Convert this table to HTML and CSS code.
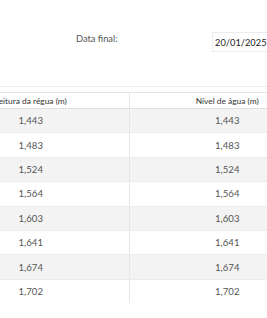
FILE: index.html
```html
<!DOCTYPE html>
<html lang="pt">
<head>
<meta charset="utf-8">
<link rel="stylesheet" href="styles.css">
</head>
<body>
<div class="filters">
  <label class="label">Data final:</label>
  <div class="date">20/01/2025</div>
</div>
<div class="card">
  <div class="clip">
    <table class="grid">
      <thead>
        <tr><th>Leitura da régua (m)</th><th>Nível de água (m)</th></tr>
      </thead>
      <tbody>
        <tr><td>1,443</td><td>1,443</td></tr>
        <tr><td>1,483</td><td>1,483</td></tr>
        <tr><td>1,524</td><td>1,524</td></tr>
        <tr><td>1,564</td><td>1,564</td></tr>
        <tr><td>1,603</td><td>1,603</td></tr>
        <tr><td>1,641</td><td>1,641</td></tr>
        <tr><td>1,674</td><td>1,674</td></tr>
        <tr><td>1,702</td><td>1,702</td></tr>
      </tbody>
    </table>
  </div>
</div>
</body>
</html>
```
FILE: styles.css
```css
html, body {
  margin: 0;
  padding: 0;
  background: #fff;
  width: 267px;
  height: 318px;
  overflow: hidden;
  font-family: Lato, "Open Sans", sans-serif;
}
.filters {
  height: 86px;
  display: flex;
  align-items: flex-start;
  white-space: nowrap;
  overflow: hidden;
}
.label {
  flex: 0 0 212px;
  box-sizing: border-box;
  padding-left: 76px;
  margin-top: 32px;
  font-size: 9.3px;
  line-height: 14px;
  color: #555;
}
.date {
  flex: 0 0 auto;
  margin-top: 32px;
  height: 20px;
  box-sizing: border-box;
  padding: 1px 10px 0 2px;
  border: 1px solid #ececec;
  border-right: none;
  font-size: 9.3px;
  line-height: 18px;
  color: #222;
}
.card {
  border-top: 1px solid #ececec;
  padding-top: 5px;
}
.clip {
  overflow: hidden;
}
.grid {
  margin-left: -67px;
  width: 392px;
  border-collapse: collapse;
  table-layout: fixed;
  border-top: 1px solid #e6e6e6;
}
.grid th {
  height: 15px;
  padding: 0;
  font-size: 8.4px;
  font-weight: 400;
  color: #333;
  text-align: center;
  border-bottom: 1px solid #e0e0e0;
  vertical-align: middle;
}
.grid th, .grid td {
  border-right: 1px solid #e6e6e6;
}
.grid th:last-child, .grid td:last-child {
  border-right: none;
}
.grid td {
  height: 23.4px;
  padding: 0;
  font-size: 9.6px;
  color: #555;
  text-align: center;
  border-bottom: 1px solid #ececec;
}
.grid tbody tr:nth-child(odd) td {
  background: #f3f3f3;
}
.grid tbody tr:last-child td {
  border-bottom: none;
}
```
